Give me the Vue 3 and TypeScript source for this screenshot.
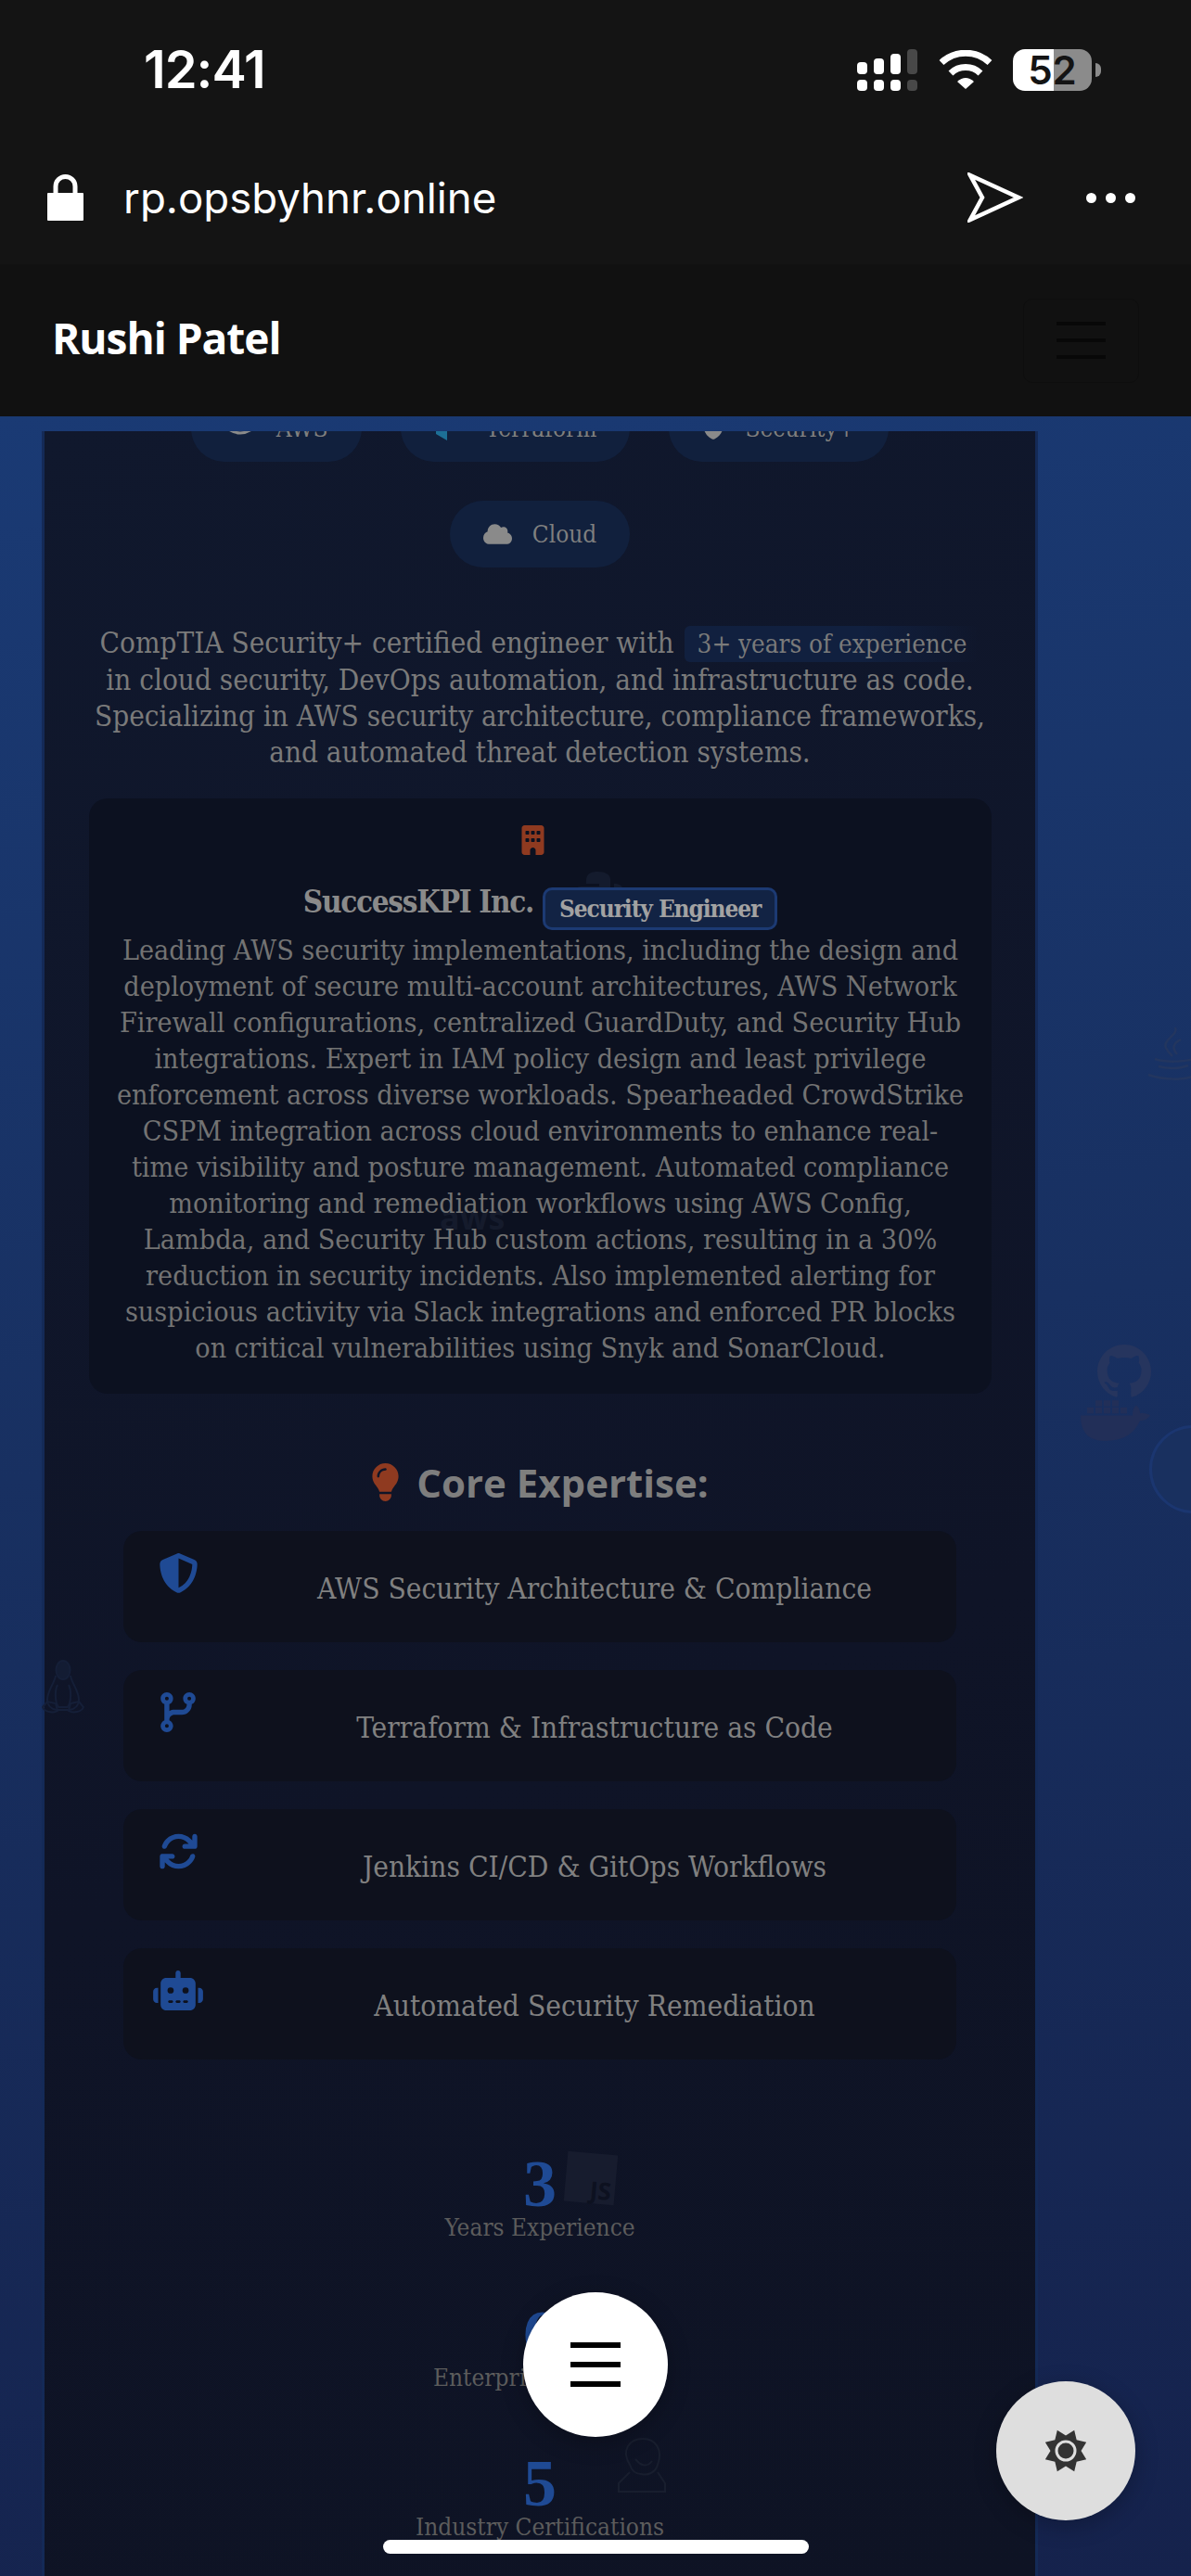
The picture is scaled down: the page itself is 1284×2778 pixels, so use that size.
<script setup lang="ts">
const pills = [
  { label: 'AWS', kind: 'aws' },
  { label: 'Terraform', kind: 'tf' },
  { label: 'Security+', kind: 'shield' },
  { label: 'Cloud', kind: 'cloud' },
]

const intro = [
  'in cloud security, DevOps automation, and infrastructure as code.',
  'Specializing in AWS security architecture, compliance frameworks,',
  'and automated threat detection systems.',
]

const roleLines = [
  'Leading AWS security implementations, including the design and',
  'deployment of secure multi-account architectures, AWS Network',
  'Firewall configurations, centralized GuardDuty, and Security Hub',
  'integrations. Expert in IAM policy design and least privilege',
  'enforcement across diverse workloads. Spearheaded CrowdStrike',
  'CSPM integration across cloud environments to enhance real-',
  'time visibility and posture management. Automated compliance',
  'monitoring and remediation workflows using AWS Config,',
  'Lambda, and Security Hub custom actions, resulting in a 30%',
  'reduction in security incidents. Also implemented alerting for',
  'suspicious activity via Slack integrations and enforced PR blocks',
  'on critical vulnerabilities using Snyk and SonarCloud.',
]

const expertise = [
  {
    label: 'AWS Security Architecture & Compliance',
    box: '0 0 512 512',
    w: 43,
    d: 'M256 0c4.6 0 9.2 1 13.4 2.9L457.7 82.8c22 9.3 38.4 31 38.3 57.2c-.5 99.2-41.3 280.7-213.6 363.2c-16.7 8-36.1 8-52.8 0C57.3 420.7 16.5 239.2 16 140c-.1-26.2 16.3-47.9 38.3-57.2L242.7 2.9C246.8 1 251.4 0 256 0zm0 66.8V444.8C394 378 431.1 230.1 432 141.4L256 66.8l0 0z',
  },
  {
    label: 'Terraform & Infrastructure as Code',
    box: '0 0 448 512',
    w: 38,
    d: 'M80 104a24 24 0 1 0 0-48 24 24 0 1 0 0 48zm80-24c0 32.8-19.7 61-48 73.3v87.8c18.8-10.9 40.7-17.1 64-17.1h96c35.3 0 64-28.7 64-64v-6.7C307.7 141 288 112.8 288 80c0-44.2 35.8-80 80-80s80 35.8 80 80c0 32.8-19.7 61-48 73.3V160c0 70.7-57.3 128-128 128H176c-35.3 0-64 28.7-64 64v6.7c28.3 12.3 48 40.5 48 73.3c0 44.2-35.8 80-80 80s-80-35.8-80-80c0-32.8 19.7-61 48-73.3V352 153.3C19.7 141 0 112.8 0 80C0 35.8 35.8 0 80 0s80 35.8 80 80zm232 0a24 24 0 1 0 -48 0 24 24 0 1 0 48 0zM80 456a24 24 0 1 0 0-48 24 24 0 1 0 0 48z',
  },
  {
    label: 'Jenkins CI/CD & GitOps Workflows',
    box: '0 0 512 512',
    w: 43,
    d: 'M105.1 202.6c7.7-21.8 20.2-42.3 37.8-59.8c62.5-62.5 163.8-62.5 226.3 0L386.3 160H336c-17.7 0-32 14.3-32 32s14.3 32 32 32H463.5c0 0 0 0 0 0h.4c17.7 0 32-14.3 32-32V64c0-17.7-14.3-32-32-32s-32 14.3-32 32v51.2L414.4 97.6c-87.5-87.5-229.3-87.5-316.8 0C73.2 122 55.6 150.7 44.8 181.4c-5.9 16.7 2.9 34.9 19.5 40.8s34.9-2.9 40.8-19.5zM39 289.3c-5 1.5-9.8 4.2-13.7 8.2c-4 4-6.7 8.8-8.1 14c-.3 1.2-.6 2.5-.8 3.8c-.3 1.7-.4 3.4-.4 5.1V448c0 17.7 14.3 32 32 32s32-14.3 32-32V396.9l17.6 17.5 0 0c87.5 87.4 229.3 87.4 316.7 0c24.4-24.4 42.1-53.1 52.9-83.7c5.9-16.7-2.9-34.9-19.5-40.8s-34.9 2.9-40.8 19.5c-7.7 21.8-20.2 42.3-37.8 59.8c-62.5 62.5-163.8 62.5-226.3 0l-.1-.1L125.6 352H176c17.7 0 32-14.3 32-32s-14.3-32-32-32H48.4c-1.6 0-3.2 .1-4.8 .3s-3.1 .5-4.6 1z',
  },
  {
    label: 'Automated Security Remediation',
    box: '0 0 640 512',
    w: 54,
    d: 'M320 0c17.7 0 32 14.3 32 32V96H472c39.8 0 72 32.2 72 72V440c0 39.8-32.2 72-72 72H168c-39.8 0-72-32.2-72-72V168c0-39.8 32.2-72 72-72H288V32c0-17.7 14.3-32 32-32zM208 384c-8.8 0-16 7.2-16 16s7.2 16 16 16h32c8.8 0 16-7.2 16-16s-7.2-16-16-16H208zm96 0c-8.8 0-16 7.2-16 16s7.2 16 16 16h32c8.8 0 16-7.2 16-16s-7.2-16-16-16H304zm96 0c-8.8 0-16 7.2-16 16s7.2 16 16 16h32c8.8 0 16-7.2 16-16s-7.2-16-16-16H400zM264 256a40 40 0 1 0 -80 0 40 40 0 1 0 80 0zm152 40a40 40 0 1 0 0-80 40 40 0 1 0 0 80zM48 224H64V416H48c-26.5 0-48-21.5-48-48V272c0-26.5 21.5-48 48-48zm544 0c26.5 0 48 21.5 48 48v96c0 26.5-21.5 48-48 48H576V224h16z',
  },
]

const stats = [
  { value: '3', label: 'Years Experience' },
  { value: '6', label: 'Enterprise Projects' },
  { value: '5', label: 'Industry Certifications' },
]

const sunPoints: string = Array.from({ length: 16 }, (_, i) => {
  const r = i % 2 === 0 ? 24 : 16.5
  const a = ((i * 22.5 + 22.5) * Math.PI) / 180
  return `${(25 + r * Math.sin(a)).toFixed(2)},${(25 - r * Math.cos(a)).toFixed(2)}`
}).join(' ')
</script>

<template>
  <div class="screen">
    <header class="chrome">
      <div class="status">
        <span class="time">12:41</span>
        <div class="status-icons">
          <svg class="signal" width="65" height="45" viewBox="0 0 65 45">
            <rect x="0" y="14" width="11" height="13" rx="4" fill="#fff" />
            <rect x="18" y="10" width="11" height="17" rx="4" fill="#fff" />
            <rect x="36" y="5" width="11" height="22" rx="4" fill="#fff" />
            <rect x="54" y="0" width="11" height="27" rx="4" fill="#484848" />
            <rect x="0" y="33" width="11" height="12" rx="4" fill="#fff" />
            <rect x="18" y="33" width="11" height="12" rx="4" fill="#fff" />
            <rect x="36" y="33" width="11" height="12" rx="4" fill="#fff" />
            <rect x="54" y="33" width="11" height="12" rx="4" fill="#484848" />
          </svg>
          <svg class="wifi" width="58" height="42" viewBox="0 0 58 42" fill="none">
            <path d="M3 13.5 A 38 38 0 0 1 55 13.5" stroke="#fff" stroke-width="7" />
            <path d="M13 25 A 23 23 0 0 1 45 25" stroke="#fff" stroke-width="7" />
            <path d="M20 34 Q29 26 38 34 L29 42 Z" fill="#fff" />
          </svg>
          <div class="battery"><span>52</span></div>
          <i class="battery-cap"></i>
        </div>
      </div>
      <div class="urlbar">
        <svg class="lock" width="39" height="50" viewBox="0 0 39 50">
          <path d="M9 22 V13 a10.500 10.500 0 0 1 21 0 V22" fill="none" stroke="#fff" stroke-width="5" />
          <rect x="0" y="20" width="39" height="30" rx="1" fill="#fff" />
        </svg>
        <span class="url">rp.opsbyhnr.online</span>
        <svg class="send" width="60" height="54" viewBox="0 0 60 54" fill="none">
          <path d="M3 3 L55 27 L3 51 L16 27 Z" stroke="#fff" stroke-width="4.500" stroke-linejoin="miter" />
        </svg>
        <div class="dots"><i></i><i></i><i></i></div>
      </div>
    </header>

    <nav class="navbar">
      <span class="brand">Rushi Patel</span>
      <div class="toggler"><i></i><i></i><i></i></div>
    </nav>

    <main class="page">
      <section class="card">
        <div class="pills">
          <span v-for="p in pills" :key="p.label" class="pill">
            <svg v-if="p.kind === 'aws'" class="pill-icon" width="34" height="30" viewBox="0 0 34 30" fill="none">
              <path d="M2 14 Q17 26 32 14" stroke="#8a8a8a" stroke-width="3" />
            </svg>
            <svg v-else-if="p.kind === 'tf'" class="pill-icon" width="34" height="30" viewBox="0 0 34 30">
              <path d="M2 8 L14 15 V28 L2 21 Z" fill="#1d6f96" />
            </svg>
            <svg v-else-if="p.kind === 'shield'" class="pill-icon" width="24" height="30" viewBox="0 0 512 512">
              <path fill="#8a8a8a" d="M256 0c4.600 0 9.200 1 13.400 2.900L457.700 82.800c22 9.300 38.400 31 38.300 57.200c-.5 99.200-41.300 280.700-213.600 363.200c-16.700 8-36.100 8-52.800 0C57.300 420.700 16.500 239.200 16 140c-.1-26.200 16.300-47.900 38.300-57.200L242.700 2.900C246.800 1 251.400 0 256 0z" />
            </svg>
            <svg v-else class="pill-icon" width="31" height="26" viewBox="0 0 640 512">
              <path fill="#8a8a8a" d="M0 336c0 79.500 64.500 144 144 144H512c70.700 0 128-57.300 128-128c0-61.900-43.900-113.600-102.400-125.400c4.100-10.700 6.400-22.400 6.400-34.600c0-53-43-96-96-96c-19.700 0-38.100 6-53.300 16.200C367 64.200 315.300 32 256 32C167.600 32 96 103.600 96 192c0 2.700 .1 5.400 .2 8.100C40.200 219.800 0 273.200 0 336z" />
            </svg>
            {{ p.label }}
          </span>
        </div>

        <p class="intro">
          CompTIA Security+ certified engineer with <mark class="hl">3+ years of experience</mark><br />
          <template v-for="line in intro" :key="line">{{ line }}<br /></template>
        </p>

        <article class="role">
          <svg class="building" width="25" height="32" viewBox="0 0 384 512">
            <path fill="#8f3a20" d="M48 0C21.500 0 0 21.500 0 48V464c0 26.500 21.500 48 48 48h96V432c0-26.500 21.500-48 48-48s48 21.500 48 48v80h96c26.500 0 48-21.500 48-48V48c0-26.500-21.500-48-48-48H48zM64 240c0-8.800 7.200-16 16-16h32c8.800 0 16 7.200 16 16v32c0 8.800-7.200 16-16 16H80c-8.800 0-16-7.200-16-16V240zm112-16h32c8.800 0 16 7.200 16 16v32c0 8.800-7.200 16-16 16H176c-8.800 0-16-7.200-16-16V240c0-8.800 7.200-16 16-16zm80 16c0-8.800 7.200-16 16-16h32c8.800 0 16 7.200 16 16v32c0 8.800-7.200 16-16 16H272c-8.800 0-16-7.200-16-16V240zM80 96h32c8.800 0 16 7.200 16 16v32c0 8.800-7.200 16-16 16H80c-8.800 0-16-7.200-16-16V112c0-8.800 7.200-16 16-16zm80 16c0-8.800 7.200-16 16-16h32c8.800 0 16 7.200 16 16v32c0 8.800-7.200 16-16 16H176c-8.800 0-16-7.200-16-16V112zM272 96h32c8.800 0 16 7.200 16 16v32c0 8.800-7.200 16-16 16H272c-8.800 0-16-7.200-16-16V112c0-8.800 7.200-16 16-16z" />
          </svg>
          <div class="role-head">
            <strong class="company">SuccessKPI Inc.</strong>
            <span class="badge">Security Engineer</span>
          </div>
          <p class="role-text"><template v-for="line in roleLines" :key="line">{{ line }}<br /></template></p>
        </article>

        <h3 class="core-title">
          <svg width="31" height="41" viewBox="0 0 384 512">
            <path fill="#8f3a20" d="M272 384c9.600-31.900 29.500-59.100 49.200-86.200l0 0c5.200-7.100 10.400-14.200 15.400-21.400c19.800-28.500 31.400-63 31.400-100.300C368 78.800 289.200 0 192 0S16 78.800 16 176c0 37.300 11.600 71.900 31.400 100.300c5 7.200 10.200 14.300 15.400 21.400l0 0c19.800 27.100 39.700 54.400 49.200 86.200H272zM192 512c44.200 0 80-35.800 80-80V416H112v16c0 44.200 35.800 80 80 80zM112 176c0 8.800-7.200 16-16 16s-16-7.200-16-16c0-61.900 50.100-112 112-112c8.800 0 16 7.200 16 16s-7.200 16-16 16c-44.200 0-80 35.800-80 80z" />
          </svg>
          Core Expertise:
        </h3>

        <ul class="expertise">
          <li v-for="item in expertise" :key="item.label" class="exp-item">
            <span class="exp-icon">
              <svg :width="item.w" height="43" :viewBox="item.box"><path fill="#1f4a94" :d="item.d" /></svg>
            </span>
            <span class="exp-label">{{ item.label }}</span>
          </li>
        </ul>

        <div class="stats">
          <div v-for="s in stats" :key="s.label" class="stat">
            <div class="stat-value">{{ s.value }}</div>
            <div class="stat-label">{{ s.label }}</div>
          </div>
        </div>
      </section>
    </main>

    <!-- faint floating technology logos, behind the card's text -->
    <div class="float py">
      <svg width="54" height="53" viewBox="0 0 54 53" fill="#1a2236">
        <path d="M27 0 C14 0 14 6 14 13 H28 V16 H8 C0 16 0 26 0 30 C0 38 4 40 10 40 V32 C10 26 14 24 20 24 H34 C38 24 40 21 40 18 V8 C40 3 34 0 27 0 Z" />
        <path d="M27 53 C40 53 40 47 40 40 H26 V37 H46 C54 37 54 27 54 23 C54 15 50 13 44 13 V21 C44 27 40 29 34 29 H20 C16 29 14 32 14 35 V45 C14 50 20 53 27 53 Z" />
      </svg>
    </div>
    <div class="float aws-mark">aws</div>
    <div class="float java">
      <svg width="60" height="60" viewBox="0 0 60 60" fill="none" stroke="#23365f" stroke-width="2.500">
        <path d="M30 1 C34 9 16 14 20 23 C22 27 25 30 27 32" />
        <path d="M36 14 C28 18 26 23 32 30" />
        <path d="M8 35 C20 39 40 38 50 35" />
        <path d="M12 43 C24 46 36 45 44 42" />
        <path d="M1 52 C18 58 42 58 50 53" />
        <path d="M50 35 C58 32 60 39 50 44" />
      </svg>
    </div>
    <div class="float gh">
      <svg width="58" height="58" viewBox="0 0 16 16" fill="#26355e">
        <path d="M8 0C3.580 0 0 3.580 0 8c0 3.540 2.290 6.530 5.470 7.590.4.070.55-.17.55-.38 0-.19-.01-.82-.01-1.490-2.010.37-2.530-.49-2.690-.94-.09-.23-.48-.94-.82-1.130-.28-.15-.68-.52-.01-.53.63-.01 1.080.58 1.230.82.72 1.210 1.870.87 2.330.66.07-.52.28-.87.51-1.070-1.780-.2-3.640-.89-3.640-3.950 0-.87.31-1.590.82-2.150-.08-.2-.36-1.020.08-2.120 0 0 .67-.21 2.200.82.64-.18 1.320-.27 2-.27.68 0 1.360.09 2 .27 1.530-1.040 2.200-.82 2.200-.82.44 1.100.16 1.920.08 2.120.51.56.82 1.270.82 2.150 0 3.070-1.870 3.750-3.650 3.950.29.25.54.73.54 1.480 0 1.070-.01 1.930-.01 2.200 0 .21.15.46.55.38A8.013 8.013 0 0016 8c0-4.420-3.580-8-8-8z" />
      </svg>
    </div>
    <div class="float docker">
      <svg width="76" height="46" viewBox="0 0 76 42" preserveAspectRatio="none" fill="#222f58">
        <rect x="7" y="8" width="7" height="6" />
        <rect x="16" y="8" width="7" height="6" />
        <rect x="25" y="8" width="7" height="6" />
        <rect x="34" y="8" width="7" height="6" />
        <rect x="43" y="8" width="7" height="6" />
        <rect x="16" y="1" width="7" height="6" />
        <rect x="25" y="1" width="7" height="6" />
        <rect x="34" y="1" width="7" height="6" />
        <path d="M0 16 H56 C56 10 58 7 60 6 C63 8 64 11 64 14 C68 13 72 14 75 16 C72 20 68 21 64 21 C58 34 46 41 26 41 C8 41 0 32 0 16 Z" />
      </svg>
    </div>
    <i class="float ring"></i>
    <div class="float tux">
      <svg width="46" height="60" viewBox="0 0 46 60" fill="none" stroke="#151f38" stroke-width="2">
        <ellipse cx="23" cy="12" rx="7.500" ry="10" fill="#131c33" />
        <path d="M15 18 C14 26 6 34 6 44 C6 50 10 54 16 55 H30 C36 54 40 50 40 44 C40 34 32 26 31 18" />
        <path d="M17 28 C14 34 14 46 18 52 H28 C32 46 32 34 29 28" />
        <path d="M6 46 L1 52 C3 57 12 59 17 56 L15 48 Z" />
        <path d="M40 46 L45 52 C43 57 34 59 29 56 L31 48 Z" />
      </svg>
    </div>
    <div class="float js"><span>JS</span></div>
    <div class="float jenkins">
      <svg width="54" height="60" viewBox="0 0 54 60" fill="none" stroke="#181e2e" stroke-width="2">
        <path d="M14 30 C4 14 14 2 28 2 C42 2 50 14 44 30 C42 38 34 42 26 40 C20 40 16 36 14 30 Z" />
        <path d="M14 38 L2 50 V59 H52 V50 L44 38" />
        <path d="M20 24 Q30 36 38 26" />
      </svg>
    </div>

    <button class="fab" type="button" aria-label="Menu"><i></i><i></i><i></i></button>
    <button class="theme" type="button" aria-label="Theme">
      <svg width="50" height="50" viewBox="0 0 50 50">
        <polygon :points="sunPoints" fill="#333" />
        <circle cx="25" cy="25" r="10" fill="#333" stroke="#dedede" stroke-width="3" />
      </svg>
    </button>
    <i class="home"></i>
  </div>
</template>

<style scoped>
.screen {
  position: relative;
  display: flex;
  flex-direction: column;
  width: 1284px;
  height: 2778px;
  overflow: hidden;
  background: #0e1324;
  font-family: "DejaVu Serif Condensed", "DejaVu Serif", serif;
}
.chrome {
  height: 285px;
  background: #141414;
  color: #fff;
  font-family: Inter, "Liberation Sans", sans-serif;
}
.status {
  display: flex;
  align-items: center;
  justify-content: space-between;
  height: 150px;
  padding: 0 97px 0 155px;
}
.time {
  font-size: 56px;
  font-weight: 600;
  letter-spacing: -1px;
}
.status-icons {
  display: flex;
  align-items: center;
}
.signal {
  margin-right: 23px;
}
.wifi {
  margin-right: 22px;
}
.battery {
  width: 85px;
  height: 45px;
  border-radius: 13px;
  background: linear-gradient(90deg, #fff 52%, #8b8b8b 52%);
  color: #141414;
  font-size: 42px;
  font-weight: 600;
  line-height: 45px;
  text-align: center;
}
.battery-cap {
  width: 6px;
  height: 15px;
  margin-left: 4px;
  border-radius: 0 8px 8px 0;
  background: #8b8b8b;
}
.urlbar {
  display: flex;
  align-items: center;
  height: 126px;
  padding: 0 60px 0 51px;
}
.url {
  flex: 1;
  margin-left: 43px;
  font-size: 45.600px;
  font-weight: 400;
}
.send {
  margin-right: 68px;
}
.dots {
  display: flex;
  gap: 10px;
}
.dots i {
  width: 11px;
  height: 11px;
  border-radius: 50%;
  background: #fff;
}
.navbar {
  display: flex;
  align-items: center;
  justify-content: space-between;
  height: 164px;
  padding: 0 56px;
  background: #111;
}
.brand {
  margin-top: -6px;
  color: #fff;
  font-family: "Open Sans", "Noto Sans", sans-serif;
  font-size: 46px;
  font-weight: 700;
  letter-spacing: -1px;
}
.toggler {
  display: flex;
  flex-direction: column;
  align-items: center;
  justify-content: center;
  gap: 14px;
  width: 123px;
  height: 89px;
  border: 1px solid #0e0e0e;
  border-radius: 10px;
}
.toggler i {
  width: 53px;
  height: 4px;
  background: #080808;
}
.page {
  flex: 1;
  min-height: 0;
  padding: 16px 165px 0 45px;
  background: linear-gradient(170deg, #1a3a74 0%, #183061 45%, #15224c 100%);
}
.card {
  height: 100%;
  overflow: hidden;
  border-left: 3px solid #142a57;
  border-right: 3px solid #142a57;
  background: linear-gradient(160deg, #10182d 0%, #0f1427 60%, #0e1324 100%);
  text-align: center;
}
.pills {
  display: flex;
  flex-wrap: wrap;
  justify-content: center;
  gap: 42px;
  width: 900px;
  margin: -39px auto 0;
}
.pill {
  display: inline-flex;
  align-items: center;
  gap: 22px;
  height: 72px;
  padding: 0 36px;
  border-radius: 36px;
  background: #11203d;
  color: #7f7f7f;
  font-size: 26px;
}
.intro {
  position: relative;
  z-index: 2;
  margin: 62px 0 0;
  color: #7a7a7a;
  font-size: 31.200px;
  line-height: 39px;
  white-space: nowrap;
}
.hl {
  display: inline-block;
  margin-left: 2px;
  padding: 0 14px;
  border-radius: 6px;
  background: linear-gradient(90deg, #11203f 60%, rgba(17, 32, 63, 0));
  color: #7a7a7a;
  font-size: 27.600px;
}
.role {
  display: flex;
  flex-direction: column;
  align-items: center;
  margin: 30px 47px 0 48px;
  padding: 29px 0 30px;
  border-radius: 20px;
  background: #0c1120;
}
.building {
  margin-right: 17px;
}
.role-head {
  position: relative;
  z-index: 2;
  display: flex;
  align-items: center;
  justify-content: center;
  gap: 10px;
  height: 52px;
  margin-top: 24px;
}
.company {
  color: #8a8a8a;
  font-size: 33px;
  font-weight: 700;
  letter-spacing: -1.300px;
}
.badge {
  margin-top: 16px;
  padding: 0 15px;
  border: 3px solid #1c3a73;
  border-radius: 10px;
  background: #122344;
  color: #a2a2a2;
  font-size: 26px;
  font-weight: 700;
  letter-spacing: -1.100px;
  line-height: 40px;
}
.role-text {
  position: relative;
  z-index: 2;
  margin: 7px 0 0;
  color: #737373;
  font-size: 30.200px;
  line-height: 39px;
  white-space: nowrap;
}
.core-title {
  display: flex;
  align-items: center;
  justify-content: center;
  gap: 18px;
  height: 54px;
  margin: 68px 0 26px;
  color: #7e7e7e;
  font-family: "Open Sans", "Noto Sans", sans-serif;
  font-size: 42px;
  font-weight: 700;
}
.expertise {
  display: flex;
  flex-direction: column;
  gap: 30px;
  margin: 0 85px;
  padding: 0;
  list-style: none;
}
.exp-item {
  display: flex;
  align-items: center;
  height: 120px;
  border-radius: 20px;
  background: #0e111d;
}
.exp-icon {
  display: flex;
  align-self: flex-start;
  justify-content: center;
  width: 118px;
  padding-top: 24px;
}
.exp-label {
  flex: 1;
  padding-top: 3px;
  color: #808080;
  font-size: 31.400px;
}
.stats {
  position: relative;
  z-index: 2;
  display: flex;
  flex-direction: column;
  margin-top: 99px;
}
.stat {
  height: 161.500px;
}
.stat-value {
  color: #1f4a94;
  font-family: "Liberation Serif", serif;
  font-size: 72px;
  font-weight: 700;
  line-height: 70px;
}
.stat-label {
  margin-top: -6px;
  color: #5c5c5c;
  font-size: 26px;
  line-height: 36px;
}
.float {
  position: absolute;
  z-index: 1;
  pointer-events: none;
}
.py {
  left: 618px;
  top: 940px;
  opacity: 0.6;
}
.aws-mark {
  left: 474px;
  top: 1288px;
  color: #151b2c;
  font-family: "Open Sans", sans-serif;
  font-size: 36px;
  font-weight: 700;
}
.java {
  left: 1237px;
  top: 1107px;
}
.gh {
  left: 1183px;
  top: 1450px;
}
.docker {
  left: 1165px;
  top: 1509px;
}
.ring {
  left: 1239px;
  top: 1537px;
  width: 95px;
  height: 95px;
  border: 3px solid #1b3670;
  border-radius: 50%;
  box-sizing: border-box;
  background: #19305f;
}
.tux {
  left: 45px;
  top: 1789px;
}
.js {
  left: 610px;
  top: 2322px;
  display: flex;
  align-items: flex-end;
  justify-content: flex-end;
  width: 54px;
  height: 54px;
  background: #171c2e;
  color: #0d1120;
  font-family: "Open Sans", sans-serif;
  font-size: 26px;
  font-weight: 700;
  line-height: 30px;
  transform: rotate(5deg);
}
.js span {
  padding-right: 4px;
}
.jenkins {
  left: 665px;
  top: 2628px;
}
.fab {
  position: absolute;
  z-index: 3;
  left: 564px;
  top: 2472px;
  display: flex;
  flex-direction: column;
  align-items: center;
  justify-content: center;
  gap: 15px;
  width: 156px;
  height: 156px;
  padding: 0;
  border: 0;
  border-radius: 50%;
  background: #fff;
  box-shadow: 0 6px 24px rgba(0, 0, 0, 0.25);
}
.fab i {
  width: 54px;
  height: 6px;
  background: #000;
}
.theme {
  position: absolute;
  z-index: 3;
  left: 1074px;
  top: 2568px;
  display: flex;
  align-items: center;
  justify-content: center;
  width: 150px;
  height: 150px;
  padding: 0;
  border: 0;
  border-radius: 50%;
  background: #dedede;
  box-shadow: 0 6px 24px rgba(0, 0, 0, 0.25);
}
.home {
  position: absolute;
  z-index: 3;
  left: 413px;
  top: 2739px;
  width: 459px;
  height: 15px;
  border-radius: 8px;
  background: #fff;
}
</style>
